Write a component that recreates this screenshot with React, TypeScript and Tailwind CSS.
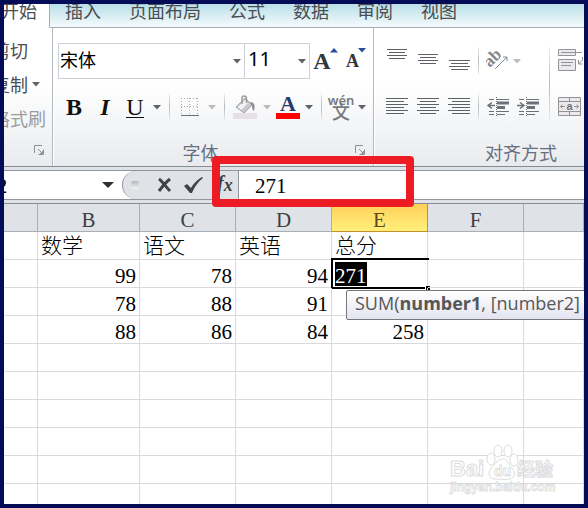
import React from 'react';
import clsx from 'clsx';

const TABS = ['插入', '页面布局', '公式', '数据', '审阅', '视图'];
const COLUMNS = ['A', 'B', 'C', 'D', 'E', 'F', ''];
const HEADINGS = ['', '数学', '语文', '英语', '总分', '', ''];
const SCORES = [
  ['', '99', '78', '94', '271', '', ''],
  ['', '78', '88', '91', '', '', ''],
  ['', '88', '86', '84', '258', '', ''],
];
const EMPTY_ROWS = 6;

const SHEET_FONT = "font-['Liberation_Serif','Noto_Sans_CJK_SC',serif]";

const Caret = ({ muted = false }: { muted?: boolean }) => (
  <svg width="8" height="5" viewBox="0 0 8 5" className={muted ? 'fill-[#b9bcc0]' : 'fill-[#5f6368]'}>
    <path d="M0 0h8L4 4.5z" />
  </svg>
);

const CaretButton = ({ label, muted }: { label: string; muted?: boolean }) => (
  <button aria-label={label} className="flex h-9 w-[14px] shrink-0 items-center justify-center">
    <Caret muted={muted} />
  </button>
);

const Separator = ({ className }: { className?: string }) => (
  <div className={clsx('w-px shrink-0 bg-linear-to-b from-[#eceef1] via-[#b4b9bf] to-[#eceef1]', className)} />
);

interface ToolButtonProps {
  label: string;
  className?: string;
  children: React.ReactNode;
}

const ToolButton: React.FC<ToolButtonProps> = ({ label, className = 'w-[30px]', children }) => (
  <button aria-label={label} className={clsx('flex h-9 shrink-0 items-center justify-center', className)}>
    {children}
  </button>
);

// Draws a set of horizontal strokes, each one given as [x1, x2, y]
const Lines = ({ rows }: { rows: number[][] }) => (
  <svg width="24" height="24" viewBox="0 0 24 24" className="stroke-[#5d6064]">
    {rows.map(([x1, x2, y]) => (
      <path key={y} d={`M${x1} ${y + 0.5}H${x2}`} />
    ))}
  </svg>
);

const Launcher = () => (
  <button aria-label="对话框启动器" className="flex h-[22px] w-[26px] shrink-0 items-center justify-center">
    <svg width="10" height="10" viewBox="0 0 10 10" fill="none" className="stroke-[#8c9197]">
      <path d="M.5 8V.5H8M4 4l4 4M9.500 4.500v5h-5M8.500 6v2.500H6" />
    </svg>
  </button>
);

const FontLetter = ({ size, up }: { size: string; up?: boolean }) => (
  <span className="flex h-7 items-end justify-center font-['Liberation_Serif',serif] font-bold text-[#33363a]">
    <span className={clsx('leading-7', size)}>A</span>
    <svg width="8" height="5" viewBox="0 0 8 5" className="-ml-px mt-px self-start fill-[#2a4c98]">
      <path d={up ? 'M0 4.500h8L4 0z' : 'M0 0h8L4 4.500z'} />
    </svg>
  </span>
);

const ClipboardGroup = () => (
  <div className="flex w-12 shrink-0 flex-col overflow-hidden">
    <div className="-ml-3 flex flex-1 flex-col items-start pt-[5px] text-lg whitespace-nowrap">
      <button className="h-[34px]">剪切</button>
      <button className="flex h-[34px] items-center gap-1">
        复制 <Caret />
      </button>
      <button className="h-[34px] text-[#9b9da0]">格式刷</button>
    </div>
    <div className="flex h-[27px] justify-end">
      <Launcher />
    </div>
  </div>
);

const FontGroup = () => (
  <div className="flex w-[319px] shrink-0 flex-col pt-[15px]">
    <div className="flex h-9 pl-1">
      <div className="relative w-[187px]">
        <select
          aria-label="字体"
          className="h-9 w-full appearance-none border border-[#cdd0d4] bg-white pb-1 pl-px text-lg text-black"
        >
          <option>宋体</option>
        </select>
        <span className="pointer-events-none absolute top-4 right-1"><Caret /></span>
      </div>
      <div className="relative -ml-px w-[66px]">
        <select
          aria-label="字号"
          className="h-9 w-full appearance-none border border-[#cdd0d4] bg-white pb-1 pl-[3px] font-['Noto_Sans',sans-serif] text-xl text-black"
        >
          <option>11</option>
        </select>
        <span className="pointer-events-none absolute top-4 right-1"><Caret /></span>
      </div>
      <ToolButton label="增大字号" className="w-[31px]"><FontLetter size="text-2xl" up /></ToolButton>
      <ToolButton label="减小字号"><FontLetter size="text-lg" /></ToolButton>
    </div>
    <div className="mt-[10px] flex h-9 items-center pl-1 font-['Liberation_Serif',serif] text-2xl text-[#111]">
      <ToolButton label="加粗" className="w-8"><span className="font-bold">B</span></ToolButton>
      <ToolButton label="倾斜"><span className="font-bold italic">I</span></ToolButton>
      <ToolButton label="下划线"><span className="border-b border-[#111] leading-5">U</span></ToolButton>
      <CaretButton label="下划线选项" />
      <Separator className="mx-[5px] h-7" />
      <ToolButton label="边框">
        <svg width="20" height="20" viewBox="0 0 20 20" fill="none">
          <path
            d="M1 1.500h17M1 9.500h17M1.500 1v17M9.500 1v17M17.500 1v17"
            className="stroke-[#a5a8ac]"
            strokeDasharray="1 2"
          />
          <path d="M1 18.500h18" className="stroke-[#6a6d71]" />
        </svg>
      </ToolButton>
      <CaretButton label="边框选项" muted />
      <Separator className="mx-[5px] h-7" />
      <ToolButton label="填充颜色">
        <svg width="24" height="24" viewBox="0 0 24 24" fill="none">
          <path d="M3 12 12 3l7 7-8 8z" fill="#c9c9cb" stroke="#a3a5a8" />
          <path d="M5 12 12 5l3 3-7 7z" fill="#f4f4f5" />
          <path d="M9 9V3.500c0-3.500 4.500-3.500 4.500 0V8" stroke="#9b9da0" strokeWidth="1.500" />
          <path d="M17 7c4 0 5.500 3 4 9-1.500-1-2-3-2-5z" fill="#8b8d90" />
          <path d="M0 18h24v6H0z" fill="#e6e1e5" />
        </svg>
      </ToolButton>
      <CaretButton label="填充颜色选项" muted />
      <ToolButton label="字体颜色" className="w-7">
        <span className="w-6 border-b-6 border-[#fe0000] text-[22px] leading-[18px] font-bold text-[#223c70]">A</span>
      </ToolButton>
      <CaretButton label="字体颜色选项" />
      <Separator className="mx-[5px] h-7" />
      <ToolButton label="拼音" className="w-7">
        <span className="flex flex-col items-center font-['Noto_Sans','Noto_Sans_CJK_SC',sans-serif] text-[#77797c]">
          <span className="text-[13px] leading-[10px] font-semibold">wén</span>
          <span className="text-lg leading-[14px] font-medium">文</span>
        </span>
      </ToolButton>
      <CaretButton label="拼音选项" />
    </div>
    <div className="mt-[14px] flex h-[27px]">
      <span className="flex-1 text-center text-lg leading-[27px] text-[#66707f]">字体</span>
      <Launcher />
    </div>
  </div>
);

const IndentIcon = ({ increase }: { increase?: boolean }) => (
  <svg width="24" height="24" viewBox="0 0 24 24" fill="none" className="stroke-[#6d7074]">
    <path d="M3 4.500h5M11 4.500h12M3 16.500h5M11 16.500h12M3 19.500h5M11 19.500h8" />
    <path d="M10.500 2v20" strokeDasharray="1 1" />
    <path d="M11 8h12" strokeWidth="3" />
    <path d="M11 12.500h8" strokeWidth="3" />
    <path d={increase ? 'M1 10.500h6M4 7.500l4 3-4 3' : 'M3 10.500h6M6 7.500l-4 3 4 3'} strokeWidth="1.500" />
  </svg>
);

const AlignGroup = () => (
  <div className="flex w-[292px] shrink-0 flex-col pt-[15px]">
    <div className="flex pl-[6px]">
      <div className="flex w-[168px] flex-col gap-[10px]">
        <div className="flex items-center">
          <ToolButton label="顶端对齐" className="w-[31px]">
            <Lines rows={[[2, 22, 0], [4, 20, 3], [2, 22, 6], [4, 20, 9]]} />
          </ToolButton>
          <ToolButton label="垂直居中" className="w-[31px]">
            <Lines rows={[[2, 22, 5], [4, 20, 8], [2, 22, 11], [4, 20, 14]]} />
          </ToolButton>
          <ToolButton label="底端对齐" className="w-[31px]">
            <Lines rows={[[2, 23, 11], [4, 21, 14], [2, 23, 17], [4, 21, 20]]} />
          </ToolButton>
          <Separator className="mx-1 h-7" />
          <ToolButton label="方向">
            <svg width="24" height="24" viewBox="0 0 24 24" fill="none">
              <text
                x="0"
                y="14"
                transform="rotate(-45 8 12)"
                className="fill-[#85878a] font-['Liberation_Serif',serif] text-[17px] font-bold"
              >
                ab
              </text>
              <path d="M9 20 21 8M17 8h4v4" className="stroke-[#85878a]" />
            </svg>
          </ToolButton>
          <button aria-label="方向选项" className="flex h-9 w-2 items-center">
            <Caret muted />
          </button>
        </div>
        <div className="flex items-center">
          <ToolButton label="左对齐" className="w-[31px]">
            <Lines rows={[[1, 23, 3], [1, 19, 6], [1, 23, 9], [1, 19, 12], [1, 23, 15], [1, 19, 18]]} />
          </ToolButton>
          <ToolButton label="居中" className="w-[31px]">
            <Lines rows={[[1, 23, 3], [4, 20, 6], [1, 23, 9], [4, 20, 12], [1, 23, 15], [4, 20, 18]]} />
          </ToolButton>
          <ToolButton label="右对齐" className="w-[31px]">
            <Lines rows={[[1, 23, 3], [5, 23, 6], [1, 23, 9], [5, 23, 12], [1, 23, 15], [5, 23, 18]]} />
          </ToolButton>
          <Separator className="mx-1 h-7" />
          <ToolButton label="减少缩进量"><IndentIcon /></ToolButton>
          <ToolButton label="增加缩进量"><IndentIcon increase /></ToolButton>
        </div>
      </div>
      <Separator className="mt-1 h-[74px]" />
      <div className="flex flex-col gap-[10px] pl-[6px]">
        <ToolButton label="自动换行" className="w-7">
          <svg width="26" height="24" viewBox="0 0 26 24" fill="#ece9ed" className="stroke-[#919397]">
            <path d="M1.500.5h17v6h-17zM1.500 10.500h17v11h-17z" />
            <path d="M4 3.500h21M4 13.500h12M4 16.500h10M25.500 8v3l-4 4M21.500 11v4h4" fill="none" />
          </svg>
        </ToolButton>
        <ToolButton label="合并后居中" className="w-7">
          <svg width="26" height="24" viewBox="0 0 26 24" fill="#ece9ed" className="stroke-[#919397]">
            <path d="M1.500 2.500h22v18h-22zM1.500 6.500h22M1.500 16.500h22M12.500 2.500v4M12.500 16.500v4" />
            <path d="M3 11.500h5M5.500 9.500l-2 2 2 2M17 11.500h5M19.500 9.500l2 2-2 2" fill="none" />
            <text
              x="12.500"
              y="15"
              textAnchor="middle"
              stroke="none"
              className="fill-[#707276] font-['Liberation_Sans',sans-serif] text-[11px] font-bold"
            >
              a
            </text>
          </svg>
        </ToolButton>
      </div>
    </div>
    <span className="mt-[14px] text-center text-lg leading-[27px] text-[#66707f]">对齐方式</span>
  </div>
);

const GroupDivider = () => <div className="w-[2px] shrink-0 border-r border-white bg-[#b3b9c1]" />;

const FormulaBar = () => (
  <div className="relative bg-[#dfe2e6] py-[3px]">
    <div className="flex h-[30px] border-y border-[#92979d] bg-white">
      <div className="flex w-[118px] shrink-0 items-center justify-between overflow-hidden pr-2">
        <input
          aria-label="名称框"
          readOnly
          value="E2"
          className={clsx('-ml-5 w-16 bg-transparent pt-1 text-[21px] text-black outline-none', SHEET_FONT)}
        />
        <button aria-label="名称框选项">
          <svg width="12" height="6" viewBox="0 0 12 6" className="fill-[#2e3033]">
            <path d="M0 0h12L6 6z" />
          </svg>
        </button>
      </div>
      <div className="flex w-[117px] shrink-0 items-center rounded-l-full border-r border-l border-[#92979d] bg-[#dfe2e6] pl-2">
        <span className="h-2 w-2 rounded-xs bg-linear-to-b from-[#b5b7b9] to-[#f5f5f5]" />
        <button aria-label="取消" className="ml-[18px]">
          <svg width="15" height="16" viewBox="0 0 15 16" fill="none" className="stroke-[#404347]">
            <path d="M2 2c3 2 7 8 11 12M13 2C9 5 5 10 2 14" strokeWidth="3" />
          </svg>
        </button>
        <button aria-label="输入" className="ml-3">
          <svg width="19" height="16" viewBox="0 0 19 16" className="fill-[#404347]">
            <path d="M0 9l3-2 4 4C10 6 13 3 18 0l1 1c-5 4-8 8-11 15H6z" />
          </svg>
        </button>
        <button
          aria-label="插入函数"
          className="ml-[14px] flex font-['Liberation_Serif',serif] font-bold text-[#3c3f43] italic"
        >
          <span className="text-xl leading-4">f</span>
          <span className="text-lg leading-5">x</span>
        </button>
      </div>
      <input
        aria-label="编辑栏"
        defaultValue="271"
        className={clsx('min-w-0 flex-1 bg-white pt-1 pl-4 text-[21px] text-black outline-none', SHEET_FONT)}
      />
    </div>
    <div className="pointer-events-none absolute -top-[11px] left-[208px] h-[51px] w-[202px] rounded border-8 border-[#ed1c24]" />
  </div>
);

const FunctionHint = () => (
  <div className="absolute top-[30px] left-[14px] z-10 h-[30px] w-80 rounded-xs border border-[#767676] bg-linear-to-b from-white to-[#e3e4f0] pl-2 text-left font-['Open_Sans',sans-serif] text-lg leading-6 font-normal whitespace-nowrap text-[#575757]">
    SUM(<span className="font-bold">number1</span>, [number2]
  </div>
);

const ActiveCell = ({ value }: { value: string }) => (
  <>
    <span className="block w-fit bg-black pt-1 leading-5 text-white">{value}</span>
    <div className="pointer-events-none absolute -top-[2px] -right-[2px] -bottom-[2px] -left-px border-y-2 border-l-2 border-black" />
    <div className="absolute -right-[3px] -bottom-[3px] h-1 w-[5px] border-l border-white bg-black" />
    <FunctionHint />
  </>
);

const CELL = 'relative h-7 border-r border-b border-[#d8d9db] p-0';

const Sheet = () => (
  <table
    className={clsx(
      'w-full table-fixed border-separate border-spacing-0 border-t border-[#878c93] bg-white text-[21px] leading-5 text-black',
      SHEET_FONT,
    )}
  >
    <colgroup>
      <col className="w-[34px]" />
      <col className="w-[102px]" />
      <col className="w-24" />
      <col className="w-24" />
      <col className="w-24" />
      <col className="w-24" />
      <col />
    </colgroup>
    <thead>
      <tr>
        {COLUMNS.map((name, i) => (
          <th
            key={i}
            className={clsx(
              'h-7 border-r border-b p-0 pt-1 font-normal',
              name === 'E'
                ? 'border-[#c58f2c] bg-linear-to-b from-[#ffd05a] to-[#fff07a] text-[#5b4a1c]'
                : 'border-[#a9afb6] bg-[#dfe2e6] text-[#3c3f43]',
            )}
          >
            {i > 0 && name}
          </th>
        ))}
      </tr>
    </thead>
    <tbody>
      <tr>
        {HEADINGS.map((text, i) => (
          <td key={i} className={clsx(CELL, 'pt-px pl-[3px] font-light')}>{text}</td>
        ))}
      </tr>
      {SCORES.map((row, r) => (
        <tr key={r}>
          {row.map((value, i) => {
            const isActive = r === 0 && i === 4;
            return (
              <td key={i} className={clsx(CELL, isActive ? 'pl-[3px]' : 'pt-1 pr-[3px] text-right')}>
                {isActive ? <ActiveCell value={value} /> : value}
              </td>
            );
          })}
        </tr>
      ))}
      {Array.from({ length: EMPTY_ROWS }, (_, r) => (
        <tr key={r}>
          {COLUMNS.map((_, i) => <td key={i} className={CELL} />)}
        </tr>
      ))}
    </tbody>
  </table>
);

const Watermark = () => (
  <svg
    width="108"
    height="56"
    viewBox="0 0 108 56"
    className="absolute right-[28px] bottom-[6px] fill-white stroke-[#dcdcdc] font-['Liberation_Sans','Noto_Sans_CJK_SC',sans-serif] font-bold"
  >
    <text x="2" y="34" className="text-[22px]">Bai</text>
    <ellipse cx="43" cy="17" rx="4" ry="6" />
    <ellipse cx="50" cy="9" rx="4" ry="6" />
    <ellipse cx="60" cy="9" rx="4" ry="6" />
    <ellipse cx="66" cy="18" rx="4" ry="6" />
    <path d="M55 17c5 0 6 6 9 9 4 4 3 10-2 11-5 1-10 0-15 0-7 0-7-7-4-11 4-3 6-9 12-9z" />
    <text x="46" y="34" className="text-[14px]" strokeWidth=".8">du</text>
    <text x="69" y="34" className="text-[18px]">经验</text>
    <text x="2" y="49" className="text-[12px]" strokeWidth=".8">jingyan.baidu.com</text>
  </svg>
);

export default function App() {
  return (
    <div className="relative flex h-screen flex-col overflow-hidden border-4 border-[#040c58] bg-white font-['Noto_Sans_CJK_SC',sans-serif] text-[#4a4d51]">
      <nav className="flex h-6 shrink-0 overflow-hidden bg-linear-to-b from-[#b9dfe9] to-[#f8fcfd] text-lg leading-3 whitespace-nowrap">
        <button className="flex w-[46px] shrink-0 items-start rounded-br-xs border-r border-[#a3acb6] bg-white">
          <span className="-ml-[3px]">开始</span>
        </button>
        <div className="flex flex-1 items-start gap-7 border-b border-[#a3acb6] pl-[15px]">
          {TABS.map(tab => (
            <button key={tab} className="shrink-0">{tab}</button>
          ))}
        </div>
      </nav>
      <div className="flex shrink-0 overflow-hidden border-b border-[#878c93] bg-linear-to-b from-white from-40% to-[#e9ebee]">
        <ClipboardGroup />
        <GroupDivider />
        <FontGroup />
        <GroupDivider />
        <AlignGroup />
      </div>
      <FormulaBar />
      <div className="min-h-0 flex-1 overflow-hidden">
        <Sheet />
      </div>
      <Watermark />
    </div>
  );
}
